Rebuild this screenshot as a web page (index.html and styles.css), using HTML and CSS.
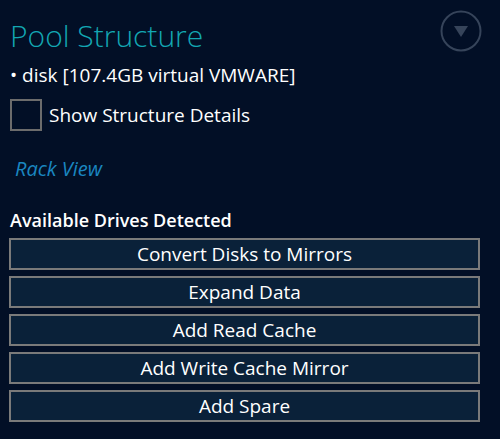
FILE: index.html
```html
<!DOCTYPE html>
<html lang="en">
<head>
  <meta charset="UTF-8">
  <meta name="viewport" content="width=device-width, initial-scale=1.0">
  <title>Pool Structure</title>
  <link rel="stylesheet" href="styles.css">
</head>
<body>
  <div class="panel">
    <header>
      <h1>Pool Structure</h1>
      <div class="toggle">
        <svg width="42" height="42" viewBox="0 0 42 42">
          <circle cx="21" cy="21" r="19.5" fill="none" stroke="#36445a" stroke-width="2"/>
          <polygon points="14,16 28,16 21,27" fill="#36445a"/>
        </svg>
      </div>
    </header>

    <p class="disk">&bull; disk [107.4GB virtual VMWARE]</p>

    <label class="check">
      <span class="box"></span>
      <span>Show Structure Details</span>
    </label>

    <a class="rack" href="#">Rack View</a>

    <h2>Available Drives Detected</h2>

    <div class="actions">
      <button>Convert Disks to Mirrors</button>
      <button>Expand Data</button>
      <button>Add Read Cache</button>
      <button>Add Write Cache Mirror</button>
      <button>Add Spare</button>
    </div>
  </div>
</body>
</html>
```

FILE: styles.css
```css
body {
  margin: 0;
  font-family: "Open Sans", "Noto Sans", sans-serif;
  background-color: #020f26;
  color: #fff;
}
.panel {
  padding: 10px 20px 0 9px;
}
header {
  display: flex;
  align-items: flex-start;
  justify-content: space-between;
}
h1 {
  margin: 2px 0 0 1px;
  font-size: 30px;
  font-weight: 300;
  line-height: 48px;
  color: #13a7b3;
}
.toggle {
  margin-right: -2px;
}
.toggle svg {
  display: block;
}
.disk {
  margin: 2px 0 0 1px;
  font-size: 19px;
  line-height: 26px;
}
.check {
  display: flex;
  align-items: center;
  gap: 7px;
  margin-top: 11px;
  font-size: 19px;
}
.box {
  width: 28px;
  height: 28px;
  border: 2px solid #6c6c6c;
  margin-left: 1px;
}
.rack {
  display: block;
  margin: 25px 0 0 6px;
  font-size: 20px;
  font-style: italic;
  color: #1a86c0;
  text-decoration: none;
  line-height: 26px;
}
h2 {
  margin: 26px 0 0 1px;
  font-size: 18px;
  font-weight: 600;
  line-height: 24px;
}
.actions {
  display: flex;
  flex-direction: column;
  gap: 6px;
  margin-top: 6px;
}
button {
  height: 32px;
  width: 471px;
  background-color: #0a2139;
  border: 2px solid #7a7a7a;
  color: #fff;
  font-family: inherit;
  font-size: 19px;
  padding: 0;
}
```
